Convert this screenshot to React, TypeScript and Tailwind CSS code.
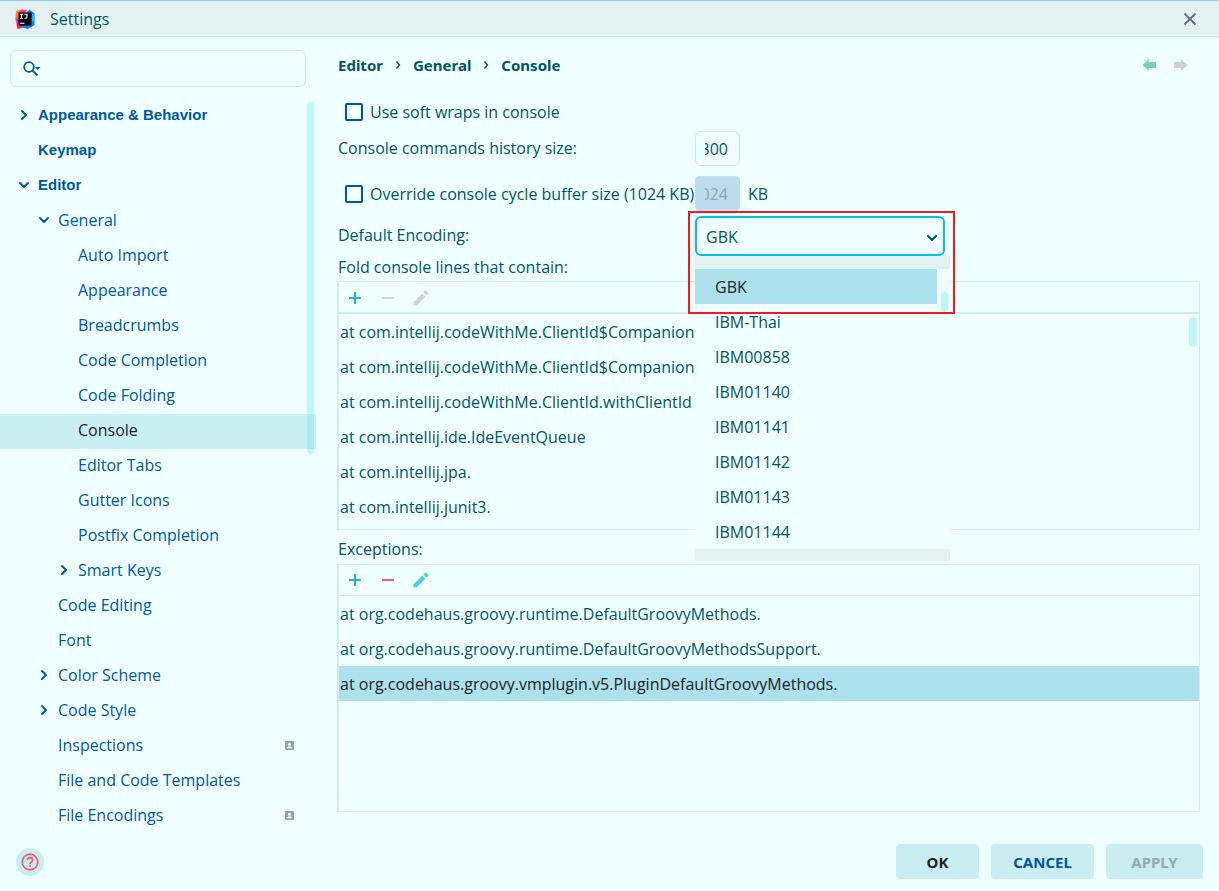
import { useState } from 'react'
import { ChevronDown, ChevronRight } from 'lucide-react'
import clsx from 'clsx'

// ─── Data ────────────────────────────────────────────────────────
interface TreeItem {
  label: string
  level: number
  state?: 'open' | 'closed'
  badge?: boolean
}

const TREE: TreeItem[] = [
  { label: 'Appearance & Behavior', level: 0, state: 'closed' },
  { label: 'Keymap', level: 0 },
  { label: 'Editor', level: 0, state: 'open' },
  { label: 'General', level: 1, state: 'open' },
  { label: 'Auto Import', level: 2 },
  { label: 'Appearance', level: 2 },
  { label: 'Breadcrumbs', level: 2 },
  { label: 'Code Completion', level: 2 },
  { label: 'Code Folding', level: 2 },
  { label: 'Console', level: 2 },
  { label: 'Editor Tabs', level: 2 },
  { label: 'Gutter Icons', level: 2 },
  { label: 'Postfix Completion', level: 2 },
  { label: 'Smart Keys', level: 2, state: 'closed' },
  { label: 'Code Editing', level: 1 },
  { label: 'Font', level: 1 },
  { label: 'Color Scheme', level: 1, state: 'closed' },
  { label: 'Code Style', level: 1, state: 'closed' },
  { label: 'Inspections', level: 1, badge: true },
  { label: 'File and Code Templates', level: 1 },
  { label: 'File Encodings', level: 1, badge: true },
]

const INDENT = ['pl-4', 'pl-9', 'pl-14']

const ENCODINGS = ['GBK', 'IBM-Thai', 'IBM00858', 'IBM01140', 'IBM01141', 'IBM01142', 'IBM01143', 'IBM01144']

const FOLD_LINES = [
  'at com.intellij.codeWithMe.ClientId$Companion$',
  'at com.intellij.codeWithMe.ClientId$Companion.w',
  'at com.intellij.codeWithMe.ClientId.withClientId',
  'at com.intellij.ide.IdeEventQueue',
  'at com.intellij.jpa.',
  'at com.intellij.junit3.',
]

const EXCEPTIONS = [
  'at org.codehaus.groovy.runtime.DefaultGroovyMethods.',
  'at org.codehaus.groovy.runtime.DefaultGroovyMethodsSupport.',
  'at org.codehaus.groovy.vmplugin.v5.PluginDefaultGroovyMethods.',
]

// ─── Icons ───────────────────────────────────────────────────────
function IdeaLogo() {
  return (
    <svg viewBox="0 0 20 20" className="h-5 w-5" aria-hidden="true">
      <path d="M1 2 6 0.5 10 2 5 11 0.5 9Z" fill="#fc801d" />
      <path d="M6 0.5 12 1 9 6 3 5Z" fill="#ff3c7a" />
      <path d="M1 9.5 6 8 10 18 2.5 20 1.5 15Z" fill="#fe2857" />
      <path d="M0.5 8.5 4 10 2.5 14 0.5 12Z" fill="#b04bd8" />
      <path d="M11 4 14.5 0.5 19.5 4.5 19.5 16 13 20 6 18Z" fill="#087cfa" />
      <path d="M17 5 19.5 5.5 19 12 16.5 13Z" fill="#22b8f5" />
      <rect x="3.5" y="3.5" width="13" height="13" fill="#000" />
      <path d="M5 5.3h3M6.5 5.3v4M5 9.3h3M9.3 5.3h2.7v2.8c0 .8-.5 1.2-1.2 1.2h-1.3" fill="none" stroke="#fff" strokeWidth="1.1" />
      <path d="M5 14.2h4.5" stroke="#fff" strokeWidth="1.1" />
    </svg>
  )
}

function SearchIcon() {
  return (
    <svg viewBox="0 0 18 16" className="h-4 w-[18px]" aria-hidden="true">
      <circle cx="6" cy="6" r="4.8" fill="none" stroke="#01579b" strokeWidth="1.8" />
      <path d="m9.4 9.4 5 5" stroke="#01579b" strokeWidth="2" />
      <path d="M11.6 6h6l-3 3z" fill="#01579b" />
    </svg>
  )
}

function CrumbSeparator() {
  return (
    <svg viewBox="0 0 14 14" className="h-3.5 w-3.5" fill="none" stroke="#005662" strokeWidth="1.4" aria-hidden="true">
      <path d="m5.5 3.5 3 3.5-3 3.5" />
    </svg>
  )
}

function ArrowIcon({ color, flip }: { color: string; flip?: boolean }) {
  return (
    <svg viewBox="0 0 14 12" className={clsx('h-3 w-3.5', flip && '-scale-x-100')} aria-hidden="true">
      <path d="M0.5 6 6.8 0v3H14v6H6.8v3z" fill={color} />
    </svg>
  )
}

function PencilIcon({ color }: { color: string }) {
  return (
    <svg viewBox="0 0 16 16" className="h-4 w-4" aria-hidden="true">
      <path d="M0.4 12.4V15.6H3.6L12.4 6.8 9.2 3.6Z" fill={color} />
      <path d="M10.2 2.6 12 0.8c.4-.4.9-.4 1.3 0l1.9 1.9c.4.4.4.9 0 1.3L13.4 5.8Z" fill={color} />
    </svg>
  )
}

function ProjectBadge() {
  return (
    <svg viewBox="0 0 9 9" className="h-[9px] w-[9px]" role="img" aria-label="Project level">
      <path d="M1 0h7a1 1 0 0 1 1 1v7a1 1 0 0 1-1 1H1a1 1 0 0 1-1-1V1a1 1 0 0 1 1-1Z" fill="#90a4ae" />
      <circle cx="4.5" cy="3.2" r="1.5" fill="#f0ffff" />
      <path d="M1.8 7.2c0-1.5 1.6-1.9 2.7-1.9s2.7.4 2.7 1.9z" fill="#f0ffff" />
    </svg>
  )
}

// ─── Sidebar ─────────────────────────────────────────────────────
function Sidebar() {
  const [selected, setSelected] = useState('Console')

  return (
    <aside className="w-[316px] shrink-0 pt-[13px]">
      <div className="mx-2.5 flex h-[37px] items-center rounded-md border border-[#cbe7f8] pl-3">
        <SearchIcon />
        <input
          type="search"
          aria-label="Search settings"
          className="min-w-0 flex-1 bg-transparent px-2 outline-none"
        />
      </div>

      <nav aria-label="Settings" className="relative mt-3">
        <ul>
          {TREE.map((item) => (
            <li key={item.label + item.level}>
              <button
                type="button"
                onClick={() => setSelected(item.label)}
                className={clsx(
                  'flex h-[35px] w-full items-center pr-[22px] pb-[3px] text-left',
                  INDENT[item.level],
                  item.level === 0 && "font-['Liberation_Sans',Arial,sans-serif] text-[15px] font-bold",
                  selected === item.label ? 'bg-[#caf0f3] text-[#212121]' : 'text-[#01579b]',
                )}
              >
                <span className="flex w-[22px] shrink-0">
                  {item.state === 'open' && <ChevronDown className="h-4 w-4 text-[#01579b]" strokeWidth={3} />}
                  {item.state === 'closed' && <ChevronRight className="h-4 w-4 text-[#01579b]" strokeWidth={3} />}
                </span>
                <span className="flex-1">{item.label}</span>
                {item.badge && <ProjectBadge />}
              </button>
            </li>
          ))}
        </ul>
        <div className="absolute top-[3px] right-[2px] h-[352px] w-[7px] rounded-full bg-[#4de3ee]/30" />
      </nav>
    </aside>
  )
}

// ─── Encoding combo box ──────────────────────────────────────────
function EncodingCombo() {
  const [value, setValue] = useState('GBK')

  return (
    <div className="relative w-[250px]">
      <select
        id="encoding"
        value={value}
        onChange={(e) => setValue(e.target.value)}
        className="h-10 w-full appearance-none rounded-md border-2 border-[#00c4dd] bg-[#f0ffff] pt-0.5 pl-[9px] outline-none"
      >
        {ENCODINGS.map((name) => (
          <option key={name}>{name}</option>
        ))}
      </select>
      <ChevronDown className="pointer-events-none absolute top-3.5 right-[5px] h-4 w-4" strokeWidth={3} />

      <div className="absolute top-10 left-0 z-10 w-[255px] bg-[#f0ffff]">
        <div className="h-[13px] bg-[#e3f1f1]" />
        <ul role="listbox" aria-label="Encodings" className="pr-[13px]">
          {ENCODINGS.map((name) => (
            <li
              key={name}
              role="option"
              aria-selected={name === value}
              onClick={() => setValue(name)}
              className={clsx('flex h-[35px] items-center pl-5', name === value && 'bg-[#ade1eb] text-[#212121]')}
            >
              {name}
            </li>
          ))}
        </ul>
        <div className="h-3 bg-[#e3f1f1]" />
        <div className="absolute top-9 right-[2px] h-5 w-[7px] rounded-full bg-[#c2f5f8]" />
      </div>

      {/* Highlight frame */}
      <div className="pointer-events-none absolute -top-[5px] -left-[7px] z-20 h-[103px] w-[267px] border-2 border-[#ed1c24]" />
    </div>
  )
}

// ─── List panel ──────────────────────────────────────────────────
interface ListPanelProps {
  lines: string[]
  label: string
  initial?: number
  className?: string
  scrollbar?: boolean
}

function ListPanel({ lines, label, initial = -1, className, scrollbar }: ListPanelProps) {
  const [selected, setSelected] = useState(initial)
  const active = selected >= 0

  return (
    <section className={clsx('-ml-px flex flex-col border border-l-2 border-[#d0ecf0]', className)}>
      <div
        className={clsx(
          'flex shrink-0 items-center gap-[17px] border-[#d0ecf0] pl-2',
          active ? 'h-[31px] border-b' : 'h-8 border-b-2 pt-0.5',
        )}
      >
        <button type="button" aria-label="Add" className="flex h-4 w-4 items-center justify-center">
          <svg viewBox="0 0 16 16" className="h-4 w-4" aria-hidden="true">
            <path d="M2 8h12M8 2v12" stroke="#1cb5cb" strokeWidth="2" />
          </svg>
        </button>
        <button type="button" aria-label="Remove" disabled={!active} className="flex h-4 w-4 items-center justify-center">
          <svg viewBox="0 0 16 16" className="h-4 w-4" aria-hidden="true">
            <path d="M2 8h12" stroke={active ? '#ee6066' : '#d2d2d2'} strokeWidth="2" />
          </svg>
        </button>
        <button type="button" aria-label="Edit" disabled={!active} className="flex h-4 w-4 items-center justify-center">
          <PencilIcon color={active ? '#4dd0e1' : '#d2d2d2'} />
        </button>
      </div>
      <ul role="listbox" aria-label={label} className="relative flex-1">
        {lines.map((line, i) => (
          <li
            key={line}
            role="option"
            aria-selected={i === selected}
            onClick={() => setSelected(i)}
            className={clsx('flex h-[35px] items-center pl-px', i === selected && 'bg-[#ade1eb] text-[#212121]')}
          >
            {line}
          </li>
        ))}
        {scrollbar && <li aria-hidden="true" className="absolute top-[3px] right-[2px] h-[30px] w-2 rounded-full bg-[#c2f5f8]" />}
      </ul>
    </section>
  )
}

// ─── Settings dialog ─────────────────────────────────────────────
const CHECKBOX = 'h-[18px] w-[18px] appearance-none rounded-[2px] border-2 border-[#01579b] checked:bg-[#01579b]'
const BUTTON = "h-[35px] rounded-[4px] bg-[#c9edf0] font-['Noto_Sans',sans-serif] text-[15px] font-bold"

export default function App() {
  return (
    <div className="flex min-h-screen flex-col bg-[#f0ffff] font-['Open_Sans','Noto_Sans',sans-serif] text-[16px] leading-5 text-[#005662]">
      <header className="flex h-[37px] shrink-0 items-center border-t border-b border-t-[#87cefa] border-b-[#c8e9f0] bg-[#e3f1f1] pr-[22px] pl-[15px]">
        <IdeaLogo />
        <h1 className="flex-1 pl-[15px]">Settings</h1>
        <button type="button" aria-label="Close">
          <svg viewBox="0 0 14 14" className="h-3.5 w-3.5" aria-hidden="true">
            <path d="m1.5 1.5 11 11M12.5 1.5l-11 11" stroke="#546e7a" strokeWidth="1.8" />
          </svg>
        </button>
      </header>

      <div className="flex flex-1">
        <Sidebar />

        <main className="flex min-w-0 flex-1 flex-col pr-[19px] pb-7 pl-[22px]">
          <div className="flex h-14 items-center justify-between pr-3">
            <nav aria-label="Breadcrumb" className="flex items-center gap-2 font-['Noto_Sans',sans-serif] text-[15px] font-bold">
              <a href="#editor">Editor</a>
              <CrumbSeparator />
              <a href="#general">General</a>
              <CrumbSeparator />
              <span>Console</span>
            </nav>
            <div className="flex gap-[18px]">
              <button type="button" aria-label="Back"><ArrowIcon color="#80cbc4" /></button>
              <button type="button" aria-label="Forward" disabled><ArrowIcon color="#d0d0d0" flip /></button>
            </div>
          </div>

          <div className="flex h-[38px] items-center gap-[7px] pl-[7px]">
            <input id="wraps" type="checkbox" className={CHECKBOX} />
            <label htmlFor="wraps">Use soft wraps in console</label>
          </div>

          <div className="flex">
            <label htmlFor="history" className="flex w-[357px] items-center pb-0.5">Console commands history size:</label>
            <input
              id="history"
              dir="rtl"
              defaultValue="300"
              className="h-[35px] w-[45px] rounded-md border border-[#cbe7f8] bg-transparent pr-[11px] pl-[9px] outline-none"
            />
          </div>

          <div className="mt-2.5 flex">
            <div className="flex w-[357px] items-center gap-[7px] pl-[7px]">
              <input id="override" type="checkbox" className={CHECKBOX} />
              <label htmlFor="override" className="whitespace-nowrap">Override console cycle buffer size (1024 KB)</label>
            </div>
            <input
              dir="rtl"
              disabled
              aria-label="Buffer size"
              defaultValue="1024"
              className="h-[35px] w-[45px] rounded-[4px] border border-[#bfe0ee] bg-[#bfdcef] pr-[11px] pl-[9px] text-[#8aa5ad]"
            />
            <span className="flex items-center pl-2">KB</span>
          </div>

          <div className="mt-[5px] flex">
            <label htmlFor="encoding" className="flex w-[357px] items-center pb-0.5">Default Encoding:</label>
            <EncodingCombo />
          </div>

          <h2 className="flex h-[25px] items-center pb-[3px]">Fold console lines that contain:</h2>
          <ListPanel lines={FOLD_LINES} label="Fold console lines that contain" className="h-[249px]" scrollbar />

          <h2 className="flex h-[34px] items-center pt-1">Exceptions:</h2>
          <ListPanel lines={EXCEPTIONS} label="Exceptions" initial={2} className="flex-1" />
        </main>
      </div>

      <footer className="flex shrink-0 items-center justify-between pt-1 pr-4 pb-3 pl-4">
        <button type="button" aria-label="Help" className="flex h-7 w-7 items-center justify-center rounded-full bg-[#c9edf0]">
          <svg viewBox="0 0 18 18" className="h-[18px] w-[18px]" fill="none" stroke="#ff5370" strokeWidth="1.7" aria-hidden="true">
            <circle cx="9" cy="9" r="7.8" />
            <path d="M6.4 7.2c0-3.4 5.2-3.3 5.2 0C11.6 9 9 9 9 11.2" />
            <path d="M9 12.3v1.8" />
          </svg>
        </button>
        <div className="flex gap-3">
          <button type="button" className={clsx(BUTTON, 'w-[83px] text-[#212121]')}>OK</button>
          <button type="button" className={clsx(BUTTON, 'w-[103px] text-[#01579b]')}>CANCEL</button>
          <button type="button" disabled className={clsx(BUTTON, 'w-[97px] text-[#8fa9ae]')}>APPLY</button>
        </div>
      </footer>
    </div>
  )
}
